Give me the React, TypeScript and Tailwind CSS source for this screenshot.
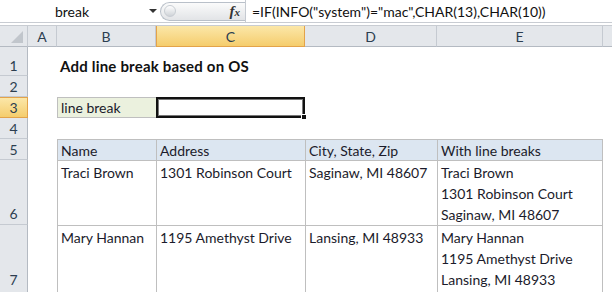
import React from "react";

const hdr = "flex items-center justify-center bg-[#e4e7eb] text-[#2c3e50] border-r border-[#c5cad1] border-b border-b-[#b4bac2]";
const rowHdr = "flex items-end justify-center bg-[#e4e7eb] text-[#2c3e50] leading-[18px] border-r border-r-[#b4bac2] border-b border-[#c5cad1]";
const tbl = "border-l border-t border-[#bfbfbf] px-[3px] leading-[21px] text-[#1b1b2b]";

export default function App() {
  return (
    <div className="h-[292px] w-[612px] overflow-hidden bg-white font-['Lato',sans-serif] text-[14px] text-[#111]">
      {/* formula bar */}
      <div className="flex h-[22px] items-center bg-white">
        <div className="flex h-full w-[146px] items-center justify-center pr-[2px] text-[#111]">break</div>
        <div className="flex w-[14px] items-center justify-center">
          <div className="h-0 w-0 border-x-[4px] border-t-[4px] border-x-transparent border-t-[#333]" />
        </div>
        <div className="flex h-[19px] w-[85px] items-center rounded-l-full border border-r-0 border-[#b9c0c9] bg-gradient-to-b from-[#fbfbfb] to-[#e2e4e7] pl-[3px]">
          <div className="h-[12px] w-[12px] rounded-full border border-[#c8cdd3] bg-gradient-to-b from-[#ffffff] to-[#cfd3d8]" />
          <span className="ml-auto mr-[5px] font-['Liberation_Serif',serif] text-[15px] font-bold italic text-[#333]">
            f<span className="text-[11px]">x</span>
          </span>
        </div>
        <div className="h-full border-l border-[#c5cad1]" />
        <div className="pl-[6px] text-[#111]">=IF(INFO("system")="mac",CHAR(13),CHAR(10))</div>
      </div>
      <div className="h-[4px] border-y border-[#c8ccd2] bg-white" />

      {/* sheet */}
      <div className="grid grid-cols-[28px_29px_99px_149px_132px_166px_9px] grid-rows-[21px_29px_21px_21px_21px_21px_65px_67px]">
        {/* header row */}
        <div className={hdr + " relative"}>
          <div className="absolute bottom-[3px] right-[4px] h-0 w-0 border-b-[12px] border-l-[12px] border-b-[#c1c6cc] border-l-transparent" />
        </div>
        <div className={hdr}>A</div>
        <div className={hdr}>B</div>
        <div className="flex items-center justify-center border-x border-b border-[#e3a34a] bg-gradient-to-b from-[#fbe7a8] to-[#f5cd6c] text-[#2c3e50]">C</div>
        <div className={hdr}>D</div>
        <div className={hdr}>E</div>
        <div className={hdr + " border-r-0"} />

        {/* row 1 */}
        <div className={rowHdr}>1</div>
        <div />
        <div className="col-span-3 flex items-end pl-[3px] text-[15px] font-bold leading-[20px] tracking-[0.2px]">Add line break based on OS</div>
        <div />
        <div />

        {/* row 2 */}
        <div className={rowHdr}>2</div>
        <div className="col-span-6" />

        {/* row 3 */}
        <div className="flex items-end justify-center border-y border-r border-[#e3a34a] bg-gradient-to-b from-[#fbe7a8] to-[#f5cd6c] leading-[18px] text-[#2c3e50]">3</div>
        <div />
        <div className="flex items-center border border-r-0 border-[#bfbfbf] bg-[#ebf1de] pl-[3px] text-[#1b1b2b]">line break</div>
        <div className="relative border-2 border-[#111] ring-1 ring-inset ring-[#777]">
          <div className="absolute -bottom-[4px] -right-[4px] h-[6px] w-[6px] border border-white bg-[#111]" />
        </div>
        <div className="col-span-3" />

        {/* row 4 */}
        <div className={rowHdr}>4</div>
        <div className="col-span-6" />

        {/* row 5 */}
        <div className={rowHdr}>5</div>
        <div />
        <div className={tbl + " bg-[#dce6f1]"}>Name</div>
        <div className={tbl + " bg-[#dce6f1]"}>Address</div>
        <div className={tbl + " bg-[#dce6f1]"}>City, State, Zip</div>
        <div className={tbl + " border-r bg-[#dce6f1]"}>With line breaks</div>
        <div />

        {/* row 6 */}
        <div className={rowHdr + " pb-[1px]"}>6</div>
        <div />
        <div className={tbl + " pt-[1px]"}>Traci Brown</div>
        <div className={tbl + " pt-[1px]"}>1301 Robinson Court</div>
        <div className={tbl + " pt-[1px]"}>Saginaw, MI 48607</div>
        <div className={tbl + " border-r pt-[1px]"}>
          <div>Traci Brown</div>
          <div>1301 Robinson Court</div>
          <div>Saginaw, MI 48607</div>
        </div>
        <div />

        {/* row 7 */}
        <div className={rowHdr + " border-b-0 pb-[3px]"}>7</div>
        <div />
        <div className={tbl + " pt-[1px]"}>Mary Hannan</div>
        <div className={tbl + " pt-[1px]"}>1195 Amethyst Drive</div>
        <div className={tbl + " pt-[1px]"}>Lansing, MI 48933</div>
        <div className={tbl + " border-r pt-[1px]"}>
          <div>Mary Hannan</div>
          <div>1195 Amethyst Drive</div>
          <div>Lansing, MI 48933</div>
        </div>
        <div />
      </div>
    </div>
  );
}
